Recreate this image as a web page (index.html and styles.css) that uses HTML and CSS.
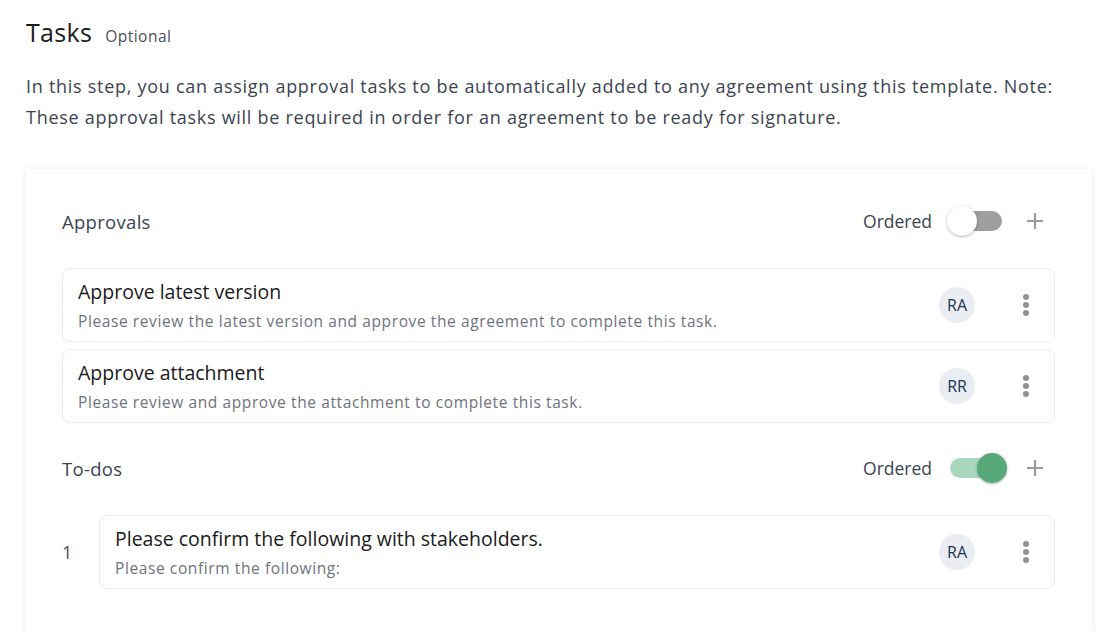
FILE: index.html
```html
<!DOCTYPE html>
<html>
<head>
<meta charset="utf-8">
<link rel="stylesheet" href="styles.css">
</head>
<body>
<div class="page">
  <div class="header">
    <h1 class="title">Tasks</h1>
    <span class="optional">Optional</span>
  </div>
  <p class="intro">In this step, you can assign approval tasks to be automatically added to any agreement using this template. Note: These approval tasks will be required in order for an agreement to be ready for signature.</p>

  <div class="card">
    <div class="section-head">
      <span class="section-title">Approvals</span>
      <div class="controls">
        <span class="ordered">Ordered</span>
        <span class="toggle off"><span class="thumb"></span></span>
        <svg class="plus" width="18" height="18" viewBox="0 0 18 18"><path d="M9 1v16M1 9h16" stroke="#9a9a9a" stroke-width="2.2" fill="none"/></svg>
      </div>
    </div>
    <div class="list">
      <div class="task">
        <div class="task-text">
          <div class="task-title">Approve latest version</div>
          <div class="task-desc">Please review the latest version and approve the agreement to complete this task.</div>
        </div>
        <span class="avatar">RA</span>
        <span class="kebab"><i></i><i></i><i></i></span>
      </div>
      <div class="task">
        <div class="task-text">
          <div class="task-title">Approve attachment</div>
          <div class="task-desc">Please review and approve the attachment to complete this task.</div>
        </div>
        <span class="avatar">RR</span>
        <span class="kebab"><i></i><i></i><i></i></span>
      </div>
    </div>

    <div class="section-head todos">
      <span class="section-title">To-dos</span>
      <div class="controls">
        <span class="ordered">Ordered</span>
        <span class="toggle on"><span class="thumb"></span></span>
        <svg class="plus" width="18" height="18" viewBox="0 0 18 18"><path d="M9 1v16M1 9h16" stroke="#9a9a9a" stroke-width="2.2" fill="none"/></svg>
      </div>
    </div>
    <div class="list">
      <div class="numbered">
        <span class="num">1</span>
        <div class="task grow">
          <div class="task-text">
            <div class="task-title">Please confirm the following with stakeholders.</div>
            <div class="task-desc">Please confirm the following:</div>
          </div>
          <span class="avatar">RA</span>
          <span class="kebab"><i></i><i></i><i></i></span>
        </div>
      </div>
    </div>
  </div>
</div>
</body>
</html>
```

FILE: styles.css
```css
* { box-sizing: border-box; }
html, body { margin: 0; padding: 0; background: #ffffff; }
body {
  font-family: "Open Sans", "Noto Sans", sans-serif;
  color: #3c4350;
}
.page {
  padding: 14px 16px 0 26px;
}
.header {
  display: flex;
  align-items: baseline;
  gap: 13px;
}
.title {
  margin: 0;
  font-size: 25px;
  font-weight: 500;
  letter-spacing: 0.3px;
  color: #1c1c1c;
  line-height: 36px;
}
.optional {
  font-size: 15.5px;
  letter-spacing: 0.5px;
  color: #4a4f58;
}
.intro {
  margin: 21px 0 0 0;
  font-size: 18px;
  letter-spacing: 0.72px;
  line-height: 31px;
  color: #3c4350;
  max-width: 1066px;
}
.card {
  margin-top: 36px;
  width: 1066px;
  background: #fff;
  box-shadow: 0 1px 6px rgba(30, 40, 70, 0.10);
  padding: 34px 37px 44px 36px;
}
.section-head {
  display: flex;
  align-items: center;
  justify-content: space-between;
  height: 36px;
  margin-bottom: 29px;
}
.section-head.todos { margin-top: 27px; margin-bottom: 29px; }
.section-title {
  font-size: 18.5px;
  letter-spacing: 0.3px;
  color: #3c4350;
}
.controls {
  display: flex;
  align-items: center;
  padding-right: 11px;
}
.ordered {
  font-size: 17.5px;
  color: #3c4350;
  margin-right: 18px;
}
.toggle {
  position: relative;
  display: inline-block;
  width: 52px;
  height: 20px;
  border-radius: 10px;
}
.toggle.off { background: #9e9e9e; }
.toggle.on { background: #a9d8be; }
.toggle .thumb {
  position: absolute;
  top: -5px;
  width: 30px;
  height: 30px;
  border-radius: 50%;
  box-shadow: 0 1px 3px rgba(0, 0, 0, 0.3);
}
.toggle.off .thumb { left: -3px; background: #fff; }
.toggle.on .thumb { right: -5px; background: #58a97a; }
.plus {
  margin-left: 24px;
}
.list {
  display: flex;
  flex-direction: column;
  gap: 7px;
}
.task {
  display: flex;
  align-items: center;
  height: 74px;
  border: 1px solid #ebebeb;
  border-radius: 8px;
  padding: 0 25px 0 15px;
}
.task.grow { flex: 1; }
.task-text {
  flex: 1;
}
.task-title {
  font-size: 19.5px;
  color: #1a1a1a;
  line-height: 26px;
}
.task-desc {
  font-size: 15.5px;
  letter-spacing: 0.6px;
  color: #6e737c;
  line-height: 20px;
  margin-top: 6px;
}
.avatar {
  width: 36px;
  height: 36px;
  border-radius: 50%;
  background: #e9edf1;
  color: #1b3550;
  font-size: 16px;
  display: flex;
  align-items: center;
  justify-content: center;
  margin-right: 48px;
}
.kebab {
  display: flex;
  flex-direction: column;
  gap: 2px;
}
.kebab i {
  display: block;
  width: 6px;
  height: 6px;
  border-radius: 50%;
  background: #919191;
}
.numbered {
  display: flex;
  align-items: center;
}
.num {
  width: 37px;
  font-size: 18px;
  color: #4a4f58;
}
```
